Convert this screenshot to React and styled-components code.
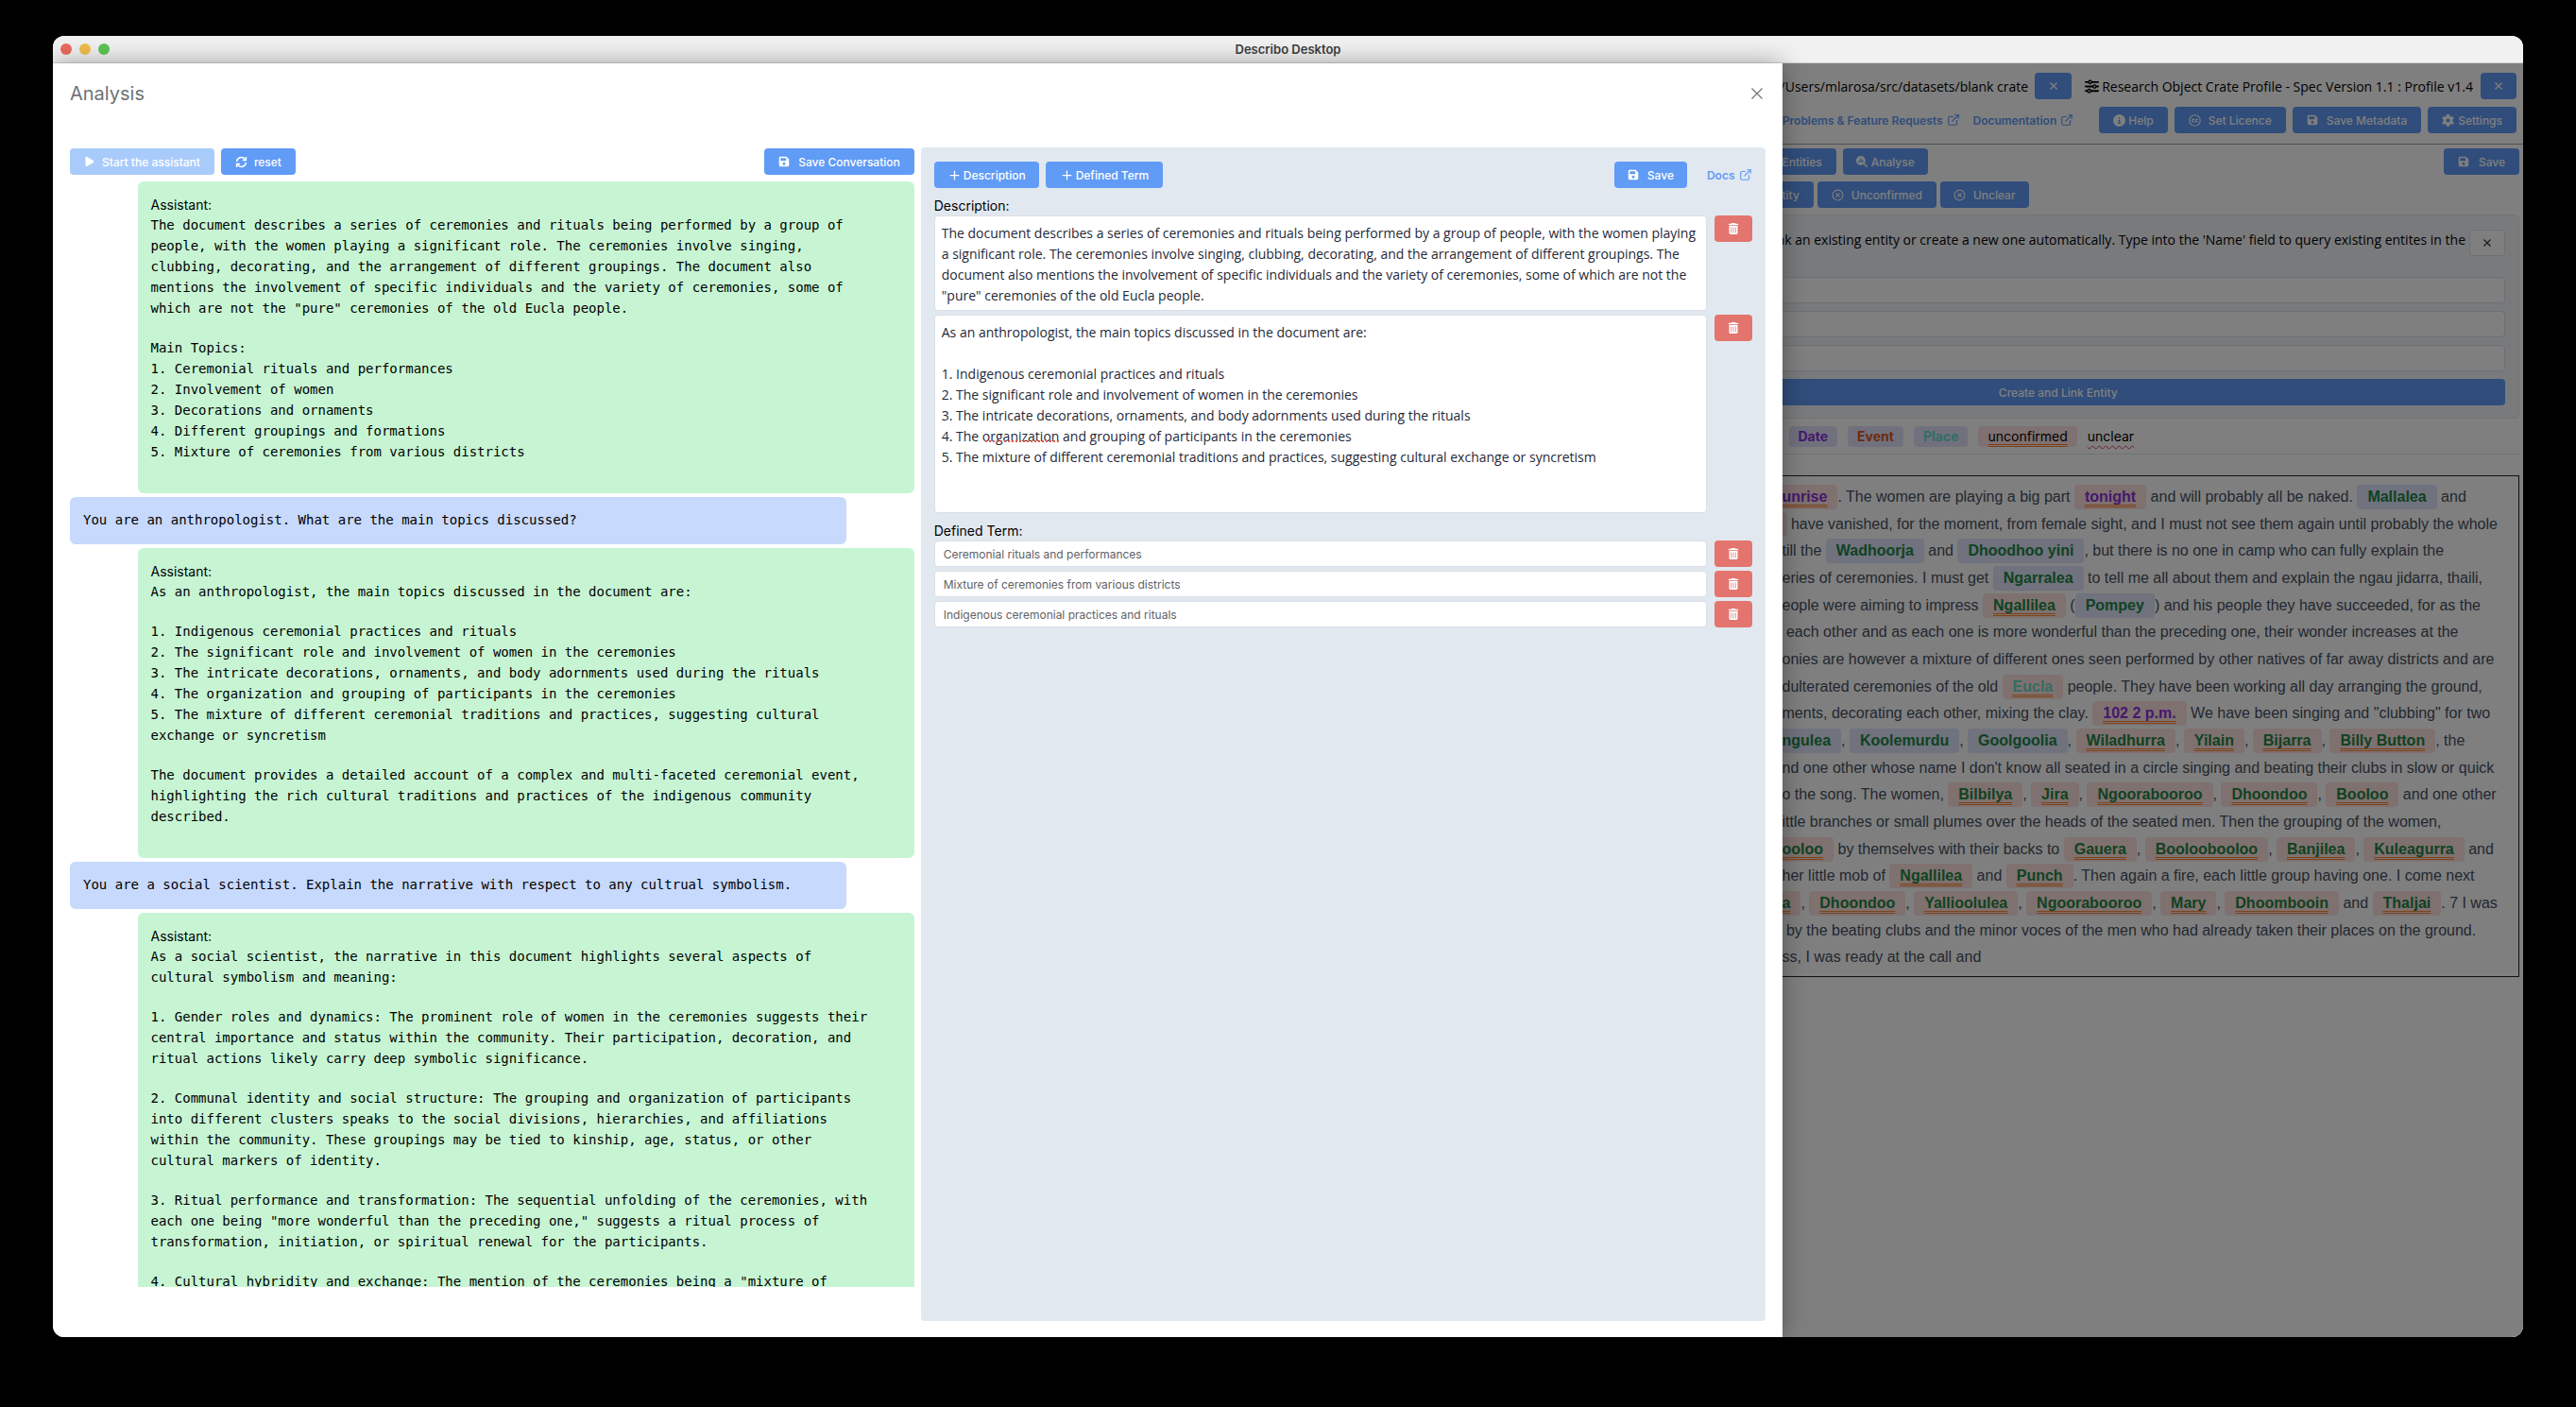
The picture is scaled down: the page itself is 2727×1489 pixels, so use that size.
import React from "react";
import styled, { createGlobalStyle, css } from "styled-components";
import { ExternalLink, CircleX, Plus } from "lucide-react";
import {
  FaPlay,
  FaFloppyDisk,
  FaTrashCan,
  FaSliders,
  FaCircleInfo,
  FaGear,
  FaMagnifyingGlassChart,
} from "react-icons/fa6";

const color = {
  primary: "#609bf6",
  danger: "#e3756e",
  assistant: "#c7f5d3",
  user: "#c7d9fc",
  panel: "#e2e8f0",
  border: "#dcdfe6",
  text: "#1f2937",
};

const proseFont = '"Open Sans", Inter, sans-serif';

const GlobalStyle = createGlobalStyle`
  *, *::before, *::after { box-sizing: border-box; }
  body {
    margin: 0;
    background: #000;
    color: #000;
    font-family: Inter, "Liberation Sans", sans-serif;
    font-size: 14px;
  }
  button, input, textarea { font-family: inherit; margin: 0; }
  p, h1, h2, h3 { margin: 0; }
`;

const Desktop = styled.div`
  display: flex;
  height: 100vh;
  padding: 38px 56px 74px;
`;

const Window = styled.div`
  flex: 1;
  display: flex;
  flex-direction: column;
  overflow: hidden;
  border-radius: 12px;
  background: #fff;
`;

const TitleBar = styled.header`
  display: grid;
  grid-template-columns: 1fr auto 1fr;
  align-items: center;
  height: 29px;
  flex: none;
  padding: 0 8px;
  background: #f1f1f1;
  border-bottom: 1px solid #d2d2d2;
`;

const Lights = styled.div`
  display: flex;
  gap: 8px;
`;

const Light = styled.span`
  width: 12px;
  height: 12px;
  border-radius: 50%;
  background: ${(p) => p.$color};
`;

const WindowTitle = styled.h1`
  font-size: 13px;
  font-weight: 600;
  color: #3d3d3d;
`;

const Body = styled.div`
  flex: 1;
  min-height: 0;
  display: grid;
  grid-template-columns: 7fr 3fr;
`;

/* Shared controls */

const Button = styled.button`
  display: inline-flex;
  align-items: center;
  justify-content: center;
  flex: none;
  gap: ${(p) => p.$gap ?? 8}px;
  height: 28px;
  min-width: ${(p) => p.$min ?? 0}px;
  padding: 0 ${(p) => p.$pad ?? 15}px;
  border: 0;
  border-radius: 4px;
  background: ${color.primary};
  color: #fff;
  font-size: 12px;
  font-weight: 500;
  white-space: nowrap;
  ${(p) =>
    p.$clipped &&
    css`
      padding-left: 0;
      border-radius: 0 4px 4px 0;
    `}
  &:disabled {
    background: #a9cbfb;
  }
`;

const DeleteButton = styled(Button)`
  min-width: 40px;
  padding: 0;
  background: ${color.danger};
`;

const Link = styled.a`
  display: inline-flex;
  align-items: center;
  gap: 4px;
  color: ${color.primary};
  font-size: 12px;
  font-weight: 600;
  text-decoration: none;
  white-space: nowrap;
`;

/* Drawer */

const Drawer = styled.section`
  z-index: 2;
  min-width: 0;
  min-height: 0;
  display: flex;
  flex-direction: column;
  padding: 18px 18px 17px;
  background: #fff;
  box-shadow: 0 0 24px rgba(0, 0, 0, 0.35);
`;

const DrawerHeader = styled.header`
  display: flex;
  align-items: center;
  justify-content: space-between;
  margin-bottom: 43px;
`;

const DrawerTitle = styled.h2`
  font-size: 20px;
  font-weight: 400;
  line-height: 28px;
  color: #6d7278;
`;

const CloseButton = styled.button`
  display: flex;
  padding: 3px;
  border: 0;
  background: none;
  color: #6b6f75;
`;

const Columns = styled.div`
  flex: 1;
  min-height: 0;
  display: grid;
  grid-template-columns: 1fr 1fr;
  gap: 7px;
`;

const Conversation = styled.div`
  min-height: 0;
  display: flex;
  flex-direction: column;
  gap: 7px;
  padding: 1px 0 36px;
`;

const Toolbar = styled.div`
  display: flex;
  align-items: center;
  gap: ${(p) => p.$gap ?? 7}px;
`;

const Spacer = styled.span`
  flex: 1;
`;

const Messages = styled.div`
  flex: 1;
  min-height: 0;
  overflow: hidden;
  display: flex;
  flex-direction: column;
  gap: 4px;
`;

const Message = styled.article`
  flex: none;
  width: 92%;
  border-radius: 6px;
  ${(p) =>
    p.$from === "user"
      ? css`
          align-self: flex-start;
          padding: 13px 14px 15px;
          background: ${color.user};
        `
      : css`
          align-self: flex-end;
          padding: 15px 14px 33px;
          background: ${color.assistant};
        `}
`;

const Speaker = styled.div`
  line-height: 20px;
`;

const Paragraph = styled.p`
  max-width: 91ch;
  font-family: "DejaVu Sans Mono", "Liberation Mono", monospace;
  font-size: 14px;
  line-height: 22px;
  white-space: pre-line;
  & + & {
    margin-top: 20px;
  }
`;

const Editor = styled.div`
  min-width: 0;
  padding: 15px 14px;
  border-radius: 4px;
  background: ${color.panel};
`;

const Section = styled.section`
  display: flex;
  flex-direction: column;
  gap: 4px;
  margin-top: 8px;
`;

const SectionTitle = styled.h3`
  margin-bottom: -4px;
  font-size: 14px;
  font-weight: 400;
  line-height: 21px;
`;

const FieldRow = styled.div`
  display: flex;
  align-items: flex-start;
  gap: 8px;
`;

const TextBox = styled.div`
  flex: 1;
  min-width: 0;
  display: flex;
  position: relative;
`;

const TextArea = styled.textarea`
  flex: 1;
  min-width: 0;
  height: ${(p) => p.$height}px;
  padding: 7px 7px 0;
  border: 1px solid ${color.border};
  border-radius: 4px;
  background: #fff;
  color: ${color.text};
  font-family: ${proseFont};
  font-size: 14px;
  line-height: 22px;
  resize: none;
  overflow: hidden;
  outline: 0;
`;

const SpellingMark = styled.span`
  position: absolute;
  left: 54px;
  top: 133px;
  width: 78px;
  border-bottom: 2px dotted #e0584c;
  pointer-events: none;
`;

const Input = styled.input`
  width: 100%;
  min-width: 0;
  height: 28px;
  padding: 0 9px;
  border: 1px solid ${color.border};
  border-radius: 4px;
  background: #fff;
  color: #606266;
  font-size: 12px;
  outline: 0;
`;

/* Workspace behind the drawer */

const Workspace = styled.main`
  position: relative;
  min-width: 0;
  background: #fff;
`;

const Backdrop = styled.div`
  position: absolute;
  inset: 0;
  z-index: 1;
  background: rgba(0, 0, 0, 0.5);
`;

const WorkspaceHeader = styled.header`
  display: flex;
  flex-direction: column;
  gap: 8px;
  padding: 10px 7px 11px 0;
  border-bottom: 1px solid #a3a3a3;
`;

const HeaderRow = styled.div`
  display: flex;
  align-items: center;
  justify-content: flex-end;
  gap: 7px;
`;

const HeaderText = styled.span`
  display: inline-flex;
  align-items: center;
  gap: 3px;
  font-family: ${proseFont};
  white-space: nowrap;
`;

const HeaderLinks = styled.nav`
  display: flex;
  gap: 14px;
  margin-right: 20px;
`;

const Profile = styled.div`
  display: flex;
  align-items: center;
  gap: 8px;
  margin-left: 7px;
`;

const WorkspaceBody = styled.div`
  display: flex;
  flex-direction: column;
  gap: 7px;
  padding: 4px 4px 0 0;
`;

const EntityPanel = styled.form`
  display: flex;
  flex-direction: column;
  gap: 8px;
  margin-left: -197px;
  padding: 15px 14px 13px 15px;
  border: 1px solid #e4e7ed;
  border-radius: 4px;
  background: #f2f5f9;
`;

const EntityHint = styled.div`
  display: flex;
  align-items: flex-start;
  justify-content: flex-end;
  gap: 4px;
  margin-bottom: 14px;
  font-family: ${proseFont};
  line-height: 22px;
  white-space: nowrap;
`;

const PlainButton = styled(Button)`
  border: 1px solid ${color.border};
  background: #fff;
  color: #404348;
`;

const Legend = styled.div`
  display: flex;
  align-items: center;
  gap: 11px;
  margin-top: -7px;
  height: 38px;
  padding-left: 7px;
  border-bottom: 1px solid #e4e7ed;
`;

const kinds = {
  person: "#1f8444",
  date: "#8a30dd",
  event: "#d9561a",
  place: "#62dcc8",
  plain: "#000",
};

const doubleLine = css`
  text-decoration: underline double #fa8532 1px;
  text-underline-offset: 3px;
  text-decoration-skip-ink: none;
`;

const LegendTag = styled.span`
  padding: 0 10px;
  border-radius: 4px;
  line-height: 22px;
  font-weight: ${(p) => (p.$kind === "plain" ? 400 : 700)};
  color: ${(p) => kinds[p.$kind]};
  background: ${(p) => (p.$unconfirmed ? "#fee2e2" : "#e2e2fc")};
  ${(p) => p.$unconfirmed && doubleLine}
`;

const Unclear = styled.span`
  text-decoration: underline wavy #e0405c 1px;
  text-underline-offset: 4px;
`;

const Document = styled.div`
  margin-top: 15px;
  padding: 7px 0 6px;
  border: 1px solid #222;
  border-left: 0;
  color: #475060;
  font-family: "Liberation Sans", Arial, sans-serif;
  font-size: 16px;
`;

const DocumentLine = styled.p`
  line-height: 29px;
  white-space: pre;
  margin-left: ${(p) => -(p.$under ?? 0)}px;
  &:nth-child(3n) {
    line-height: 28px;
  }
`;

const Mark = styled.mark`
  padding: 4px 11px 5px ${(p) => (p.$clipped ? 0 : 11)}px;
  border-radius: ${(p) => (p.$clipped ? "0 4px 4px 0" : "4px")};
  font-weight: 700;
  color: ${(p) => kinds[p.$kind]};
  background: ${(p) => (p.$unconfirmed ? "#fee2df" : "#e0e5fb")};
  ${(p) => p.$unconfirmed && doubleLine}
`;

const MarkTail = styled.span`
  padding: 4px 0 5px 5px;
  border-radius: 0 4px 4px 0;
  background: #fee2df;
`;

const CloseIcon = ({ size = 8, weight = 1.4 }) => (
  <svg width={size} height={size} viewBox={`0 0 ${size} ${size}`} fill="none" stroke="currentColor" strokeWidth={weight}>
    <path d={`M.5 .5L${size - 0.5} ${size - 0.5}M${size - 0.5} .5L.5 ${size - 0.5}`} />
  </svg>
);

const LicenceIcon = () => (
  <svg width="13" height="13" viewBox="0 0 24 24" fill="none" stroke="currentColor" strokeWidth="2">
    <circle cx="12" cy="12" r="10.5" />
    <path d="M11.2 10.2a2.6 2.6 0 1 0 0 3.6M18 10.2a2.6 2.6 0 1 0 0 3.6" />
  </svg>
);

const ReloadIcon = () => (
  <svg width="13" height="13" viewBox="0 0 24 24" fill="none" stroke="currentColor" strokeWidth="2.8">
    <path d="M3 11a9 9 0 0 1 16.2-4.4M21 13a9 9 0 0 1-16.2 4.4" />
    <path d="M21 1.8v6.6h-6.6M3 22.2v-6.6h6.6" />
  </svg>
);

const messages = [
  {
    from: "assistant",
    text: [
      'The document describes a series of ceremonies and rituals being performed by a group of people, with the women playing a significant role. The ceremonies involve singing, clubbing, decorating, and the arrangement of different groupings. The document also mentions the involvement of specific individuals and the variety of ceremonies, some of which are not the "pure" ceremonies of the old Eucla people.',
      "Main Topics:\n1. Ceremonial rituals and performances\n2. Involvement of women\n3. Decorations and ornaments\n4. Different groupings and formations\n5. Mixture of ceremonies from various districts",
    ],
  },
  { from: "user", text: ["You are an anthropologist. What are the main topics discussed?"] },
  {
    from: "assistant",
    text: [
      "As an anthropologist, the main topics discussed in the document are:",
      "1. Indigenous ceremonial practices and rituals\n2. The significant role and involvement of women in the ceremonies\n3. The intricate decorations, ornaments, and body adornments used during the rituals\n4. The organization and grouping of participants in the ceremonies\n5. The mixture of different ceremonial traditions and practices, suggesting cultural exchange or syncretism",
      "The document provides a detailed account of a complex and multi-faceted ceremonial event, highlighting the rich cultural traditions and practices of the indigenous community described.",
    ],
  },
  {
    from: "user",
    text: ["You are a social scientist. Explain the narrative with respect to any cultrual symbolism."],
  },
  {
    from: "assistant",
    text: [
      "As a social scientist, the narrative in this document highlights several aspects of cultural symbolism and meaning:",
      "1. Gender roles and dynamics: The prominent role of women in the ceremonies suggests their central importance and status within the community. Their participation, decoration, and ritual actions likely carry deep symbolic significance.",
      "2. Communal identity and social structure: The grouping and organization of participants into different clusters speaks to the social divisions, hierarchies, and affiliations within the community. These groupings may be tied to kinship, age, status, or other cultural markers of identity.",
      '3. Ritual performance and transformation: The sequential unfolding of the ceremonies, with each one being "more wonderful than the preceding one," suggests a ritual process of transformation, initiation, or spiritual renewal for the participants.',
      '4. Cultural hybridity and exchange: The mention of the ceremonies being a "mixture of',
    ],
  },
];

const descriptions = [
  {
    height: 101,
    text: 'The document describes a series of ceremonies and rituals being performed by a group of people, with the women playing a significant role. The ceremonies involve singing, clubbing, decorating, and the arrangement of different groupings. The document also mentions the involvement of specific individuals and the variety of ceremonies, some of which are not the "pure" ceremonies of the old Eucla people.',
  },
  {
    height: 210,
    misspelt: true,
    text: "As an anthropologist, the main topics discussed in the document are:\n\n1. Indigenous ceremonial practices and rituals\n2. The significant role and involvement of women in the ceremonies\n3. The intricate decorations, ornaments, and body adornments used during the rituals\n4. The organization and grouping of participants in the ceremonies\n5. The mixture of different ceremonial traditions and practices, suggesting cultural exchange or syncretism",
  },
];

const terms = [
  "Ceremonial rituals and performances",
  "Mixture of ceremonies from various districts",
  "Indigenous ceremonial practices and rituals",
];

/* A line is a list of plain strings and marked entities. */
const confirmed = (text, clipped) => ({ text, kind: "person", clipped });
const person = (text, clipped) => ({ text, kind: "person", unconfirmed: true, clipped });
const date = (text) => ({ text, kind: "date", unconfirmed: true });
const place = (text) => ({ text, kind: "place", unconfirmed: true });

const lines = [
  { under: 20, parts: [date("sunrise"), ". The women are playing a big part ", date("tonight"), " and will probably all be naked. ", confirmed("Mallalea"), " and"] },
  { parts: [{ tail: true }, " have vanished, for the moment, from female sight, and I must not see them again until probably the whole"] },
  { parts: ["till the ", confirmed("Wadhoorja"), " and ", confirmed("Dhoodhoo yini"), ", but there is no one in camp who can fully explain the"] },
  { parts: ["eries of ceremonies. I must get ", confirmed("Ngarralea"), " to tell me all about them and explain the ngau jidarra, thaili,"] },
  { parts: ["eople were aiming to impress ", person("Ngallilea"), " (", confirmed("Pompey"), ") and his people they have succeeded, for as the"] },
  { parts: [" each other and as each one is more wonderful than the preceding one, their wonder increases at the"] },
  { parts: ["onies are however a mixture of different ones seen performed by other natives of far away districts and are"] },
  { parts: ["dulterated ceremonies of the old ", place("Eucla"), " people. They have been working all day arranging the ground,"] },
  { parts: ["ments, decorating each other, mixing the clay. ", date("102 2 p.m."), ' We have been singing and "clubbing" for two'] },
  { parts: [confirmed("ngulea", true), ", ", confirmed("Koolemurdu"), ", ", confirmed("Goolgoolia"), ", ", person("Wiladhurra"), ", ", person("Yilain"), ", ", person("Bijarra"), ", ", person("Billy Button"), ", the"] },
  { parts: ["nd one other whose name I don't know all seated in a circle singing and beating their clubs in slow or quick"] },
  { parts: ["o the song. The women, ", person("Bilbilya"), ", ", person("Jira"), ", ", person("Ngoorabooroo"), ", ", person("Dhoondoo"), ", ", person("Booloo"), " and one other"] },
  { parts: ["ittle branches or small plumes over the heads of the seated men. Then the grouping of the women,"] },
  { parts: [person("ooloo", true), " by themselves with their backs to ", person("Gauera"), ", ", person("Booloobooloo"), ", ", person("Banjilea"), ", ", person("Kuleagurra"), " and"] },
  { parts: ["her little mob of ", person("Ngallilea"), " and ", person("Punch"), ". Then again a fire, each little group having one. I come next"] },
  { parts: [person("a", true), ", ", person("Dhoondoo"), ", ", person("Yallioolulea"), ", ", person("Ngoorabooroo"), ", ", person("Mary"), ", ", person("Dhoombooin"), " and ", person("Thaljai"), ". 7 I was"] },
  { parts: [" by the beating clubs and the minor voces of the men who had already taken their places on the ground."] },
  { parts: ["ss, I was ready at the call and"] },
];

function Part({ part }) {
  if (typeof part === "string") return part;
  if (part.tail) return <MarkTail />;
  return (
    <Mark $kind={part.kind} $unconfirmed={part.unconfirmed} $clipped={part.clipped}>
      {part.text}
    </Mark>
  );
}

function ConversationColumn() {
  return (
    <Conversation>
      <Toolbar>
        <Button disabled $gap={7}>
          <FaPlay size={12} />
          Start the assistant
        </Button>
        <Button $gap={7}>
          <ReloadIcon />
          reset
        </Button>
        <Spacer />
        <Button $gap={9}>
          <FaFloppyDisk size={12} />
          Save Conversation
        </Button>
      </Toolbar>
      <Messages>
        {messages.map((message, i) => (
          <Message key={i} $from={message.from}>
            {message.from === "assistant" && <Speaker>Assistant:</Speaker>}
            {message.text.map((paragraph) => (
              <Paragraph key={paragraph}>{paragraph}</Paragraph>
            ))}
          </Message>
        ))}
      </Messages>
    </Conversation>
  );
}

function Delete({ label }) {
  return (
    <DeleteButton type="button" aria-label={label}>
      <FaTrashCan size={12} />
    </DeleteButton>
  );
}

function EditorColumn() {
  return (
    <Editor>
      <Toolbar>
        <Button $gap={2} $pad={14}>
          <Plus size={15} strokeWidth={2} />
          Description
        </Button>
        <Button $gap={2}>
          <Plus size={15} strokeWidth={2} />
          Defined Term
        </Button>
        <Spacer />
        <Toolbar $gap={21}>
          <Button $gap={9} $pad={14}>
            <FaFloppyDisk size={12} />
            Save
          </Button>
          <Link href="#docs">
            Docs
            <ExternalLink size={14} strokeWidth={2} />
          </Link>
        </Toolbar>
      </Toolbar>
      <Section>
        <SectionTitle>Description:</SectionTitle>
        {descriptions.map((item, i) => (
          <FieldRow key={i}>
            <TextBox>
              <TextArea
                aria-label={`Description ${i + 1}`}
                $height={item.height}
                defaultValue={item.text}
                spellCheck={false}
              />
              {item.misspelt && <SpellingMark />}
            </TextBox>
            <Delete label={`Delete description ${i + 1}`} />
          </FieldRow>
        ))}
      </Section>
      <Section>
        <SectionTitle>Defined Term:</SectionTitle>
        {terms.map((term, i) => (
          <FieldRow key={term}>
            <Input aria-label={`Defined term ${i + 1}`} defaultValue={term} />
            <Delete label={`Delete defined term ${i + 1}`} />
          </FieldRow>
        ))}
      </Section>
    </Editor>
  );
}

function WorkspaceColumn() {
  return (
    <Workspace>
      <WorkspaceHeader>
        <HeaderRow>
          <HeaderText>/Users/mlarosa/src/datasets/blank crate</HeaderText>
          <Button $pad={0} $min={39} aria-label="Close crate">
            <CloseIcon />
          </Button>
          <Profile>
            <HeaderText>
              <FaSliders size={15} />
              Research Object Crate Profile - Spec Version 1.1 : Profile v1.4
            </HeaderText>
            <Button $pad={0} $min={38} aria-label="Remove profile">
              <CloseIcon />
            </Button>
          </Profile>
        </HeaderRow>
        <HeaderRow>
          <HeaderLinks>
            <Link href="#problems">
              Problems &amp; Feature Requests
              <ExternalLink size={14} />
            </Link>
            <Link href="#documentation">
              Documentation
              <ExternalLink size={14} />
            </Link>
          </HeaderLinks>
          <Button $gap={3}>
            <FaCircleInfo size={13} />
            Help
          </Button>
          <Button>
            <LicenceIcon />
            Set Licence
          </Button>
          <Button $gap={9}>
            <FaFloppyDisk size={12} />
            Save Metadata
          </Button>
          <Button $gap={4}>
            <FaGear size={13} />
            Settings
          </Button>
        </HeaderRow>
      </WorkspaceHeader>
      <WorkspaceBody>
        <Toolbar>
          <Button $clipped>Entities</Button>
          <Button $gap={4} $pad={14}>
            <FaMagnifyingGlassChart size={12} />
            Analyse
          </Button>
          <Spacer />
          <Button $gap={10}>
            <FaFloppyDisk size={12} />
            Save
          </Button>
        </Toolbar>
        <Toolbar $gap={4}>
          <Button $clipped>tity</Button>
          <Button>
            <CircleX size={13} />
            Unconfirmed
          </Button>
          <Button $pad={14}>
            <CircleX size={13} />
            Unclear
          </Button>
        </Toolbar>
        <EntityPanel>
          <EntityHint>
            nk an existing entity or create a new one automatically. Type into the 'Name' field to query existing
            entites in the
            <PlainButton type="button" $pad={0} $min={38} aria-label="Close">
              <CloseIcon />
            </PlainButton>
          </EntityHint>
          <Input aria-label="Identifier" />
          <Input aria-label="Type" />
          <Input aria-label="Name" />
          <Button type="button">Create and Link Entity</Button>
        </EntityPanel>
        <Legend>
          <LegendTag $kind="date">Date</LegendTag>
          <LegendTag $kind="event">Event</LegendTag>
          <LegendTag $kind="place">Place</LegendTag>
          <LegendTag $kind="plain" $unconfirmed>
            unconfirmed
          </LegendTag>
          <Unclear>unclear</Unclear>
        </Legend>
        <Document>
          {lines.map((line, i) => (
            <DocumentLine key={i} $under={line.under}>
              {line.parts.map((part, j) => (
                <Part key={j} part={part} />
              ))}
            </DocumentLine>
          ))}
        </Document>
      </WorkspaceBody>
      <Backdrop />
    </Workspace>
  );
}

export default function App() {
  return (
    <>
      <GlobalStyle />
      <Desktop>
        <Window>
          <TitleBar>
            <Lights>
              <Light $color="#ec6a5e" />
              <Light $color="#f0be4d" />
              <Light $color="#5fc454" />
            </Lights>
            <WindowTitle>Describo Desktop</WindowTitle>
          </TitleBar>
          <Body>
            <Drawer aria-label="Analysis">
              <DrawerHeader>
                <DrawerTitle>Analysis</DrawerTitle>
                <CloseButton aria-label="Close analysis">
                  <CloseIcon size={12} weight={1.1} />
                </CloseButton>
              </DrawerHeader>
              <Columns>
                <ConversationColumn />
                <EditorColumn />
              </Columns>
            </Drawer>
            <WorkspaceColumn />
          </Body>
        </Window>
      </Desktop>
    </>
  );
}
